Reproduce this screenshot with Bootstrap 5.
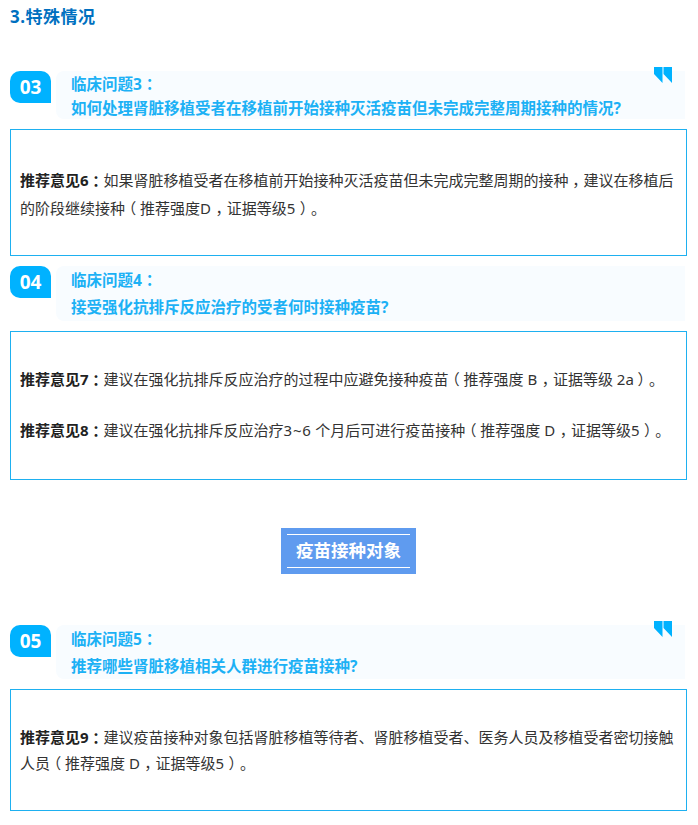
<!DOCTYPE html>
<html lang="zh-CN">
<head>
<meta charset="utf-8">
<title>特殊情况</title>
<link rel="stylesheet" href="https://cdn.jsdelivr.net/npm/bootstrap@5.3.0/dist/css/bootstrap.min.css">
<style>
html,body{background:#fff;overflow:hidden}
body{font-family:"Noto Sans","Noto Sans CJK SC",sans-serif;font-size:15px;color:#333;height:825px}
.sheet{padding:0 11px 0 10px}
.sec-title{font-size:17px;line-height:24px;font-weight:700;color:#0070c0;margin:5px 0 42px;letter-spacing:.5px}
.qa-head{position:relative;gap:5px;margin-right:2px}
.num-tag{width:41px;height:32px;background:#00b2ff;color:#fff;font-size:19px;font-weight:700;line-height:32px;text-align:center;border-radius:10px 10px 0 10px;flex:none}
.q-body{flex:1 1 auto;background:#f8fcff;color:#1cb1f5;font-size:15.5px;font-weight:700;padding:0 15px;border-radius:8px 0 0 8px;min-width:0}
.q-body p{margin:0}
.lh-a{height:48px;line-height:24px;padding-top:1px}
.lh-b{line-height:27px;padding-top:1px}
.lh-c{line-height:27px;padding-top:1px;height:54px}
.quote-mark{position:absolute;top:-4px;right:13px;width:18px;height:16px;display:block}
.a-box{border:1px solid #1eb0f0;padding:0 9px;margin-top:10px;color:#333;display:flex;flex-direction:column;justify-content:center}
.a-box p{margin:0}
.a-box b{font-weight:700;color:#222}
.wd{letter-spacing:.7px}
.pc{display:inline-block;width:1em;text-align:center;font-feature-settings:"halt"}
.box-a{height:127px;line-height:28px;padding-top:3px}
.box-b{height:149px;line-height:28px;padding-bottom:3px}
.box-c{height:122px;line-height:26px}
.para-gap p+p{margin-top:23px}
.mt-head{margin-top:10px}
.band{width:135px;height:46px;background:#5f9bef;color:#fff;font-size:17.5px;font-weight:700;padding:6px;margin:48px auto 51px}
.band-in{border-top:1px solid #fff;border-bottom:1px solid #fff;height:34px;line-height:31px;text-align:center}
</style>
</head>
<body>
<div class="sheet">
  <div class="sec-title">3.特殊情况</div>

  <div class="qa-head d-flex">
    <div class="num-tag">03</div>
    <div class="q-body lh-a"><p>临床问题3<span class="pc">：</span></p><p>如何处理肾脏移植受者在移植前开始接种灭活疫苗但未完成完整周期接种的情况?</p></div>
    <svg class="quote-mark" viewBox="0 0 18 16"><path fill="#00b2ff" d="M0 0h8.500v16L0 7zM9.500 0H18v16L9.500 7z"/></svg>
  </div>
  <div class="a-box box-a">
    <p><b>推荐意见6<span class="pc">：</span></b>如果肾脏移植受者在移植前开始接种灭活疫苗但未完成完整周期的接种<span class="pc">，</span>建议在移植后<br>的阶段继续接种<span class="pc">（</span>推荐强度<span class="wd">D</span><span class="pc">，</span>证据等级<span class="wd">5</span><span class="pc">）</span>。</p>
  </div>

  <div class="qa-head d-flex mt-head">
    <div class="num-tag">04</div>
    <div class="q-body lh-b"><p>临床问题4<span class="pc">：</span></p><p>接受强化抗排斥反应治疗的受者何时接种疫苗?</p></div>
  </div>
  <div class="a-box box-b para-gap">
    <p><b>推荐意见7<span class="pc">：</span></b>建议在强化抗排斥反应治疗的过程中应避免接种疫苗<span class="pc">（</span>推荐强度 <span class="wd">B</span><span class="pc">，</span>证据等级 2a<span class="pc">）</span>。</p>
    <p><b>推荐意见8<span class="pc">：</span></b>建议在强化抗排斥反应治疗<span class="wd">3~6</span> 个月后可进行疫苗接种<span class="pc">（</span>推荐强度 <span class="wd">D</span><span class="pc">，</span>证据等级<span class="wd">5</span><span class="pc">）</span>。</p>
  </div>

  <div class="band"><div class="band-in">疫苗接种对象</div></div>

  <div class="qa-head d-flex">
    <div class="num-tag">05</div>
    <div class="q-body lh-c"><p>临床问题5<span class="pc">：</span></p><p>推荐哪些肾脏移植相关人群进行疫苗接种?</p></div>
    <svg class="quote-mark" viewBox="0 0 18 16"><path fill="#00b2ff" d="M0 0h8.500v16L0 7zM9.500 0H18v16L9.500 7z"/></svg>
  </div>
  <div class="a-box box-c">
    <p><b>推荐意见9<span class="pc">：</span></b>建议疫苗接种对象包括肾脏移植等待者、肾脏移植受者、医务人员及移植受者密切接触<br>人员<span class="pc">（</span>推荐强度 <span class="wd">D</span><span class="pc">，</span>证据等级<span class="wd">5</span><span class="pc">）</span>。</p>
  </div>
</div>
<script src="https://cdn.jsdelivr.net/npm/bootstrap@5.3.0/dist/js/bootstrap.bundle.min.js"></script>
</body>
</html>
